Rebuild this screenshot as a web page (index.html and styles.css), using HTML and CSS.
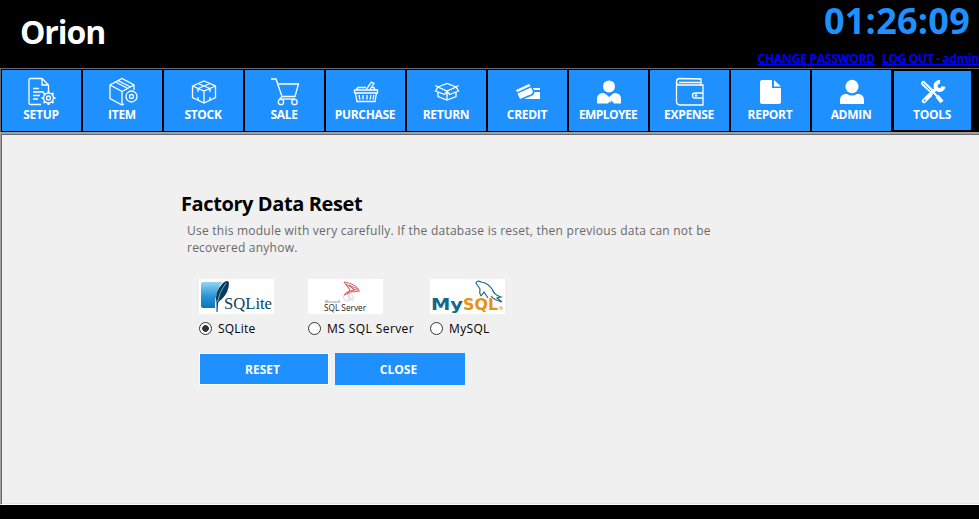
FILE: index.html
```html
<!DOCTYPE html>
<html lang="en">
<head>
<meta charset="utf-8">
<title>Orion</title>
<link rel="stylesheet" href="styles.css">
</head>
<body>
<header class="header">
  <h1 class="brand">Orion</h1>
  <div class="session">
    <div class="clock">01:26:09</div>
    <div class="links"><a class="change" href="#">CHANGE PASSWORD</a><a class="logout" href="#">LOG OUT - admin</a></div>
  </div>
</header>
<nav class="nav">
  <a class="tile"><svg viewBox="0 0 30 30"><path d="M14 27.500H3.500Q2 27.500 2 26V3Q2 1.500 3.500 1.500H15L21.500 8V14M15 1.500V8H21.500M6 11.500H12M6 15H17M6 18.500H13M6 22H11"/><circle cx="21.500" cy="21" r="5"/><circle cx="21.500" cy="21" r="2"/><path stroke-width="2" d="M21.500 14V16M21.500 26V28M14.500 21H16.500M26.500 21H28.500M16.500 16L18 17.500M25 24.500L26.500 26M16.500 26L18 24.500M25 17.500L26.500 16"/></svg><span>SETUP</span></a>
  <a class="tile"><svg viewBox="0 0 30 30"><path d="M16 27L14 28L2 21.500V8L14 1.500L26 8V13M14 28V14.500L2 8M14 14.500L26 8M7.500 5L20 11.500M10 3.700L22.500 10"/><circle cx="23.500" cy="19.500" r="5.500"/><circle cx="23.500" cy="19.500" r="2"/></svg><span>ITEM</span></a>
  <a class="tile"><svg viewBox="0 0 30 30"><path d="M3.500 9L15 4L26.500 9V20.500L15 26L3.500 20.500ZM3.500 9L15 14L26.500 9M15 14V26M9 6.500L21 11.500M21 6.500L9 11.500M9 11.500V15M21 11.500V15M9 20V23M21 20V23"/></svg><span>STOCK</span></a>
  <a class="tile"><svg viewBox="0 0 30 30"><path d="M1 2H6L12 19.500H25L28.500 7H8M12 19.500L9.500 22"/><path d="M11 22H25"/><circle cx="11" cy="25" r="2.700"/><circle cx="24.500" cy="25" r="2.700"/></svg><span>SALE</span></a>
  <a class="tile"><svg viewBox="0 0 30 30"><path d="M3.500 13H26.500V16H3.500ZM4.500 16L6 24.500H24L25.500 16M8 18L9 22.500M12 18V22.500M16 18V22.500M20 18L19 22.500M23 18L22 22.500M5 13L7 10.500H15M24 13L23 10.500H21"/><path d="M15.500 12L20.500 5L23 6.500L18.500 13"/></svg><span>PURCHASE</span></a>
  <a class="tile"><svg viewBox="0 0 30 30"><path d="M6 10L15 6.500L24 10L15 14ZM6 10L3.500 14L12.500 17.500L15 14L17.500 17.500L26.500 14L24 10M6 15V19.500L15 23L24 19.500V15M15 14V23M6 10L3.500 8.500M24 10L26.500 8.500"/></svg><span>RETURN</span></a>
  <a class="tile"><svg viewBox="0 0 30 30"><g class="solid"><path d="M3 13L16 7L17.500 9L4 15.200ZM4.500 16.500L18 10.500L20 14.500Q19 18 15 18.500L7 22Z"/><path d="M20 11H27V13H21ZM21.500 15H27V22H11L17 19.500Q21 18.500 21.500 15Z"/></g></svg><span>CREDIT</span></a>
  <a class="tile"><svg viewBox="0 0 30 30"><g class="solid"><circle cx="15" cy="9.500" r="6"/><path d="M3 26.500V22Q3 17 8 16H10L15 20L20 16H22Q27 17 27 22V26.500H20L17 23L14 26.500Z"/></g><path d="M12 18L17 25M18 18L20 22"/></svg><span class="narrow">EMPLOYEE</span></a>
  <a class="tile"><svg viewBox="0 0 30 30"><path d="M26 8V2L4 1.500Q1.500 2 1.500 5V25Q2 28 5 28H28V8H4Q1.500 8 1.500 5M4 5.500H26M28 16H20Q17.500 16 17.500 18.500T20 21H28"/><circle cx="21" cy="18.500" r=".7"/></svg><span>EXPENSE</span></a>
  <a class="tile"><svg viewBox="0 0 30 30"><g class="solid"><path d="M6 3H16V11H25V25Q25 27 23 27H6Q4 27 4 25V5Q4 3 6 3Z"/><path d="M18 3L25 9.500H18Z"/></g></svg><span>REPORT</span></a>
  <a class="tile"><svg viewBox="0 0 30 30"><g class="solid"><ellipse cx="15" cy="9.500" rx="6.500" ry="6.800"/><path d="M3 27V23Q3 18 8 17H10Q15 20 20 17H22Q27 18 27 23V27Z"/></g></svg><span>ADMIN</span></a>
  <a class="tile active"><svg viewBox="0 0 30 30"><path stroke-width="5" stroke-linecap="round" d="M5.500 6.500L14 14"/><path class="blue" d="M5 6L13 14M7.500 5L15 12"/><path stroke-width="1.800" d="M14 14L19 19"/><path stroke-width="4" d="M19 19L24 25"/><path stroke-width="4.500" stroke-linecap="round" d="M12 18L6 24"/><path stroke-width="3" d="M12 18L18 12"/><path stroke-width="4" d="M22 5A4 4 0 1 0 25.500 9.500"/><circle class="hole" cx="6.500" cy="23.500" r="1"/></svg><span>TOOLS</span></a>
</nav>
<main class="panel">
  <section class="reset">
    <h2>Factory Data Reset</h2>
    <p>Use this module with very carefully. If the database is reset, then previous data can not be<br>recovered anyhow.</p>
    <div class="options">
      <label class="option">
        <svg class="logo" viewBox="0 0 75 35"><defs><linearGradient id="lite" x2="0" y2="1"><stop stop-color="#91d5f5"/><stop offset=".55" stop-color="#2a94d4"/><stop offset="1" stop-color="#0876bd"/></linearGradient></defs><rect x="2" y="3" width="23" height="26" rx="2" fill="url(#lite)"/><path fill="#fff" d="M16 30Q15 12 25 1L31 12L24 30Z"/><path fill="#093b5a" d="M17.500 24Q15 13 24 4Q29 0 30 4Q30 13 23 20Q20 22 19 24L18.500 33H17.500Z"/><path d="M18.500 23Q20 13 27 4" fill="none" stroke="#8fc0d8" stroke-width=".8"/><text class="serif" x="25" y="29.500" textLength="48" lengthAdjust="spacingAndGlyphs" font-size="17" fill="#0b4360">SQLite</text></svg>
        <span class="choice"><input type="radio" name="db" checked><span class="c-lite">SQLite</span></span>
      </label>
      <label class="option">
        <svg class="logo" viewBox="0 0 75 35"><g fill="none" stroke="#dc555b" stroke-width=".9"><path d="M36 3Q48 5 51 11Q42 10 36 16Q43 12 52 12M36 3L42 11L38 5L47 11L41 6L50 10M36 16L42 11L39 15L46 11"/></g><path d="M35 16Q35 20 39 23M38 14L45 22M42 13L40 22L46 19L42 13" fill="none" stroke="#ccc" stroke-width=".8"/><text class="sans" x="17" y="24" textLength="15" lengthAdjust="spacingAndGlyphs" font-size="3" fill="#555">Microsoft</text><text class="sans" x="16" y="32" textLength="42" lengthAdjust="spacingAndGlyphs" font-size="9.500" fill="#222">SQL Server</text></svg>
        <span class="choice"><input type="radio" name="db"><span class="c-ms">MS SQL Server</span></span>
      </label>
      <label class="option">
        <svg class="logo" viewBox="0 0 75 35"><path fill="none" stroke="#176a8b" stroke-width="1.200" d="M51 17Q49 14 50 10L46 4Q47 1 51 3Q58 4 62 10Q64 16 71 18L67 19L72 23Q64 21 61 17M51 17L54 13L58 19"/><text class="mysql" x="1" y="30.500" textLength="32" lengthAdjust="spacingAndGlyphs" font-size="15" fill="#13678a">My</text><text class="mysql" x="33" y="30.500" textLength="35" lengthAdjust="spacingAndGlyphs" font-size="15" fill="#e59215">SQL</text><circle cx="71" cy="29" r="1.300" fill="none" stroke="#e59215" stroke-width=".8"/></svg>
        <span class="choice"><input type="radio" name="db"><span class="c-my">MySQL</span></span>
      </label>
    </div>
    <div class="actions"><button class="focused">RESET</button><button>CLOSE</button></div>
  </section>
</main>
</body>
</html>
```
FILE: styles.css
```css
* { box-sizing: border-box; }
body { margin: 0; width: 979px; height: 519px; overflow: hidden; background: #000; font-family: "Open Sans", "Noto Sans", sans-serif; }
.header { height: 68px; display: flex; justify-content: space-between; }
.brand { margin: 10px 0 0 20px; color: #fff; font-size: 32px; line-height: 44px; letter-spacing: -1.1px; }
.session { display: flex; flex-direction: column; align-items: flex-end; white-space: nowrap; }
.clock { height: 50px; padding-right: 9px; color: #1e90ff; font-size: 36px; font-weight: 700; line-height: 42px; letter-spacing: .25px; }
.links { display: flex; gap: 7px; font-size: 12px; line-height: 18px; font-weight: 700; }
.links a { color: #00f; }
.change { letter-spacing: -.2px; }
.logout { letter-spacing: -.33px; }
.nav { height: 64px; display: flex; gap: 2px; padding: 1px 0 0 1px; border-top: 1px solid #696969; border-left: 1px solid #696969; }
.tile { width: 79px; height: 61px; background: #1e90ff; color: #fff; display: flex; flex-direction: column; align-items: center; padding: 7px 1px 0 0; font-size: 12px; font-weight: 700; line-height: 16px; letter-spacing: -.3px; white-space: nowrap; }
.tile svg { width: 30px; height: 30px; margin-left: 2px; fill: none; stroke: #fff; stroke-width: 1.3; }
.tile .solid { fill: #fff; stroke: none; }
.tile .blue { stroke: #1e90ff; stroke-width: .8; }
.tile .hole { fill: #1e90ff; stroke: none; }
.narrow { letter-spacing: -.6px; }
.active { width: 77px; height: 59px; margin: 1px 0 0 1px; padding-top: 6px; }
.panel { height: 373px; background: #f0f0f0; border-top: 2px solid #a0a0a0; border-left: 1px solid #a0a0a0; border-bottom: 1px solid #fff; box-shadow: inset 1px 1px #696969, inset 0 -1px #e3e3e3; padding: 55px 0 0 180px; }
h2 { margin: 0; font-size: 20px; line-height: 30px; letter-spacing: -.4px; color: #000; }
p { margin: 3px 0 0 6px; font-size: 12px; line-height: 17px; letter-spacing: .24px; color: #696969; white-space: nowrap; }
.options { display: flex; margin: 23px 0 0 18px; }
.option { display: flex; flex-direction: column; width: 109px; white-space: nowrap; }
.option:nth-child(2) { width: 122px; }
.logo { width: 75px; height: 35px; background: #fff; }
.serif { font-family: "Liberation Serif", serif; }
.sans { font-family: "Open Sans", sans-serif; }
.mysql { font-family: "DejaVu Sans", sans-serif; font-weight: 700; }
.choice { display: flex; align-items: center; gap: 6px; height: 28px; font-size: 12px; color: #000; }
.c-lite { letter-spacing: .2px; }
.c-ms { letter-spacing: .42px; }
.c-my { letter-spacing: .35px; }
input { appearance: none; margin: 0; width: 13px; height: 13px; border: 1px solid #333; border-radius: 50%; background: #fff; }
input:checked { background: radial-gradient(circle, #333 0 3px, #fff 3.7px); }
.actions { display: flex; gap: 6px; margin: 11px 0 0 18px; }
button { width: 130px; height: 32px; padding: 0 3px 0 0; border: 0; background: #1e90ff; color: #fff; font: 700 12px "Open Sans", sans-serif; }
.focused { border: 1px solid #fff; }
```
